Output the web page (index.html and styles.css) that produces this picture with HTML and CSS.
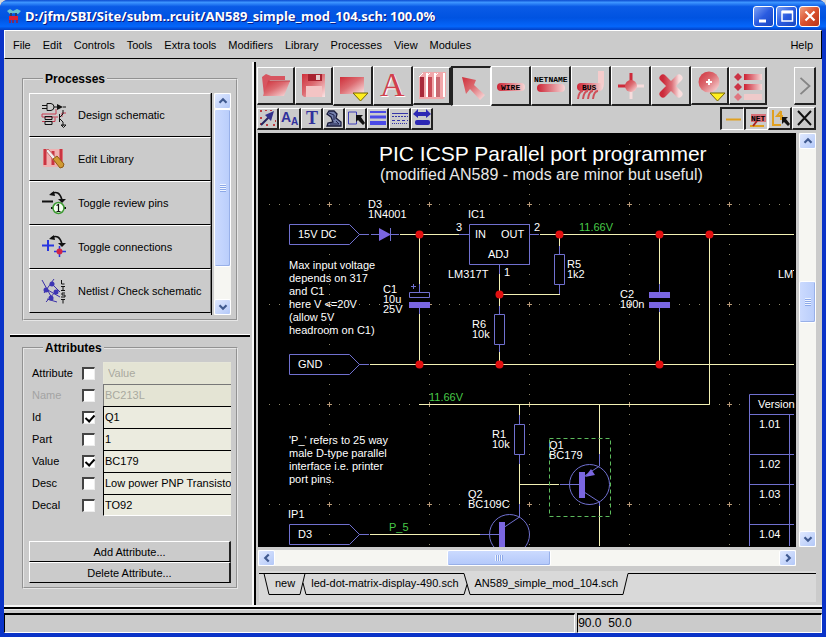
FILE: index.html
```html
<!DOCTYPE html>
<html lang="en">
<head>
<meta charset="utf-8">
<title>AN589_simple_mod_104.sch</title>
<link rel="stylesheet" href="styles.css">
</head>
<body>
<svg class="defs" aria-hidden="true">
  <defs>
    <linearGradient id="red" x1="0" y1="0" x2="1" y2="1"><stop offset="0" stop-color="#cf2f3a"/><stop offset=".45" stop-color="#dc6a70"/><stop offset="1" stop-color="#fbe6e6"/></linearGradient>
    <linearGradient id="redh" x1="0" y1="0" x2="1" y2="0"><stop offset="0" stop-color="#cc2233"/><stop offset="1" stop-color="#f6d6d6"/></linearGradient>
    <linearGradient id="cross" x1="0" y1="0" x2="1" y2="0"><stop offset="0" stop-color="#cc2a3a"/><stop offset=".55" stop-color="#dc7078"/><stop offset="1" stop-color="#f8dede"/></linearGradient>
  </defs>
</svg>
<div class="window">
  <header class="titlebar">
    <svg class="app-icon" viewBox="0 0 16 16"><path d="M1 3l3-2 3 2 4-2 4 2-3 3-4-1-4 1z" fill="#6cc3cf"/><path d="M5 5v4M10 5v4" stroke="#27406e" stroke-width="2"/><path d="M3 8h9v4H3z" fill="#dc2233"/><path d="M4 12v3M7 12v3M11 12v3" stroke="#a51c38" stroke-width="1.5"/></svg>
    <h1 class="title">D:/jfm/SBI/Site/subm..rcuit/AN589_simple_mod_104.sch: 100.0%</h1>
    <div class="win-buttons">
      <button class="win-btn" aria-label="Minimize"><svg viewBox="0 0 18 18"><path d="M4 14h7" stroke="#fff" stroke-width="3"/></svg></button>
      <button class="win-btn" aria-label="Maximize"><svg viewBox="0 0 18 18"><path d="M4 4.500h10.500v9.500H4z" fill="none" stroke="#fff" stroke-width="1.500"/><path d="M4 5h11" stroke="#fff" stroke-width="3"/></svg></button>
      <button class="win-btn close" aria-label="Close"><svg viewBox="0 0 18 18"><path d="M4.500 4.500l9 9m0-9l-9 9" stroke="#fff" stroke-width="2.200"/></svg></button>
    </div>
  </header>
  <div class="client">
    <nav class="menubar">
      <button>File</button><button>Edit</button><button>Controls</button><button>Tools</button><button>Extra tools</button><button>Modifiers</button><button>Library</button><button>Processes</button><button>View</button><button>Modules</button><button class="help">Help</button>
    </nav>
    <main class="main">
      <aside class="side">
        <section class="side-top">
          <fieldset class="group">
            <legend>Processes</legend>
            <div class="process-box">
              <div class="process-list">
                <button><svg viewBox="0 0 26 26"><g fill="none" stroke="#c83a50"><path d="M15 7v5H1v3h16M1 19.500h13v-4M25 11h-4v4"/></g><g fill="none" stroke="#111"><path d="M1 3.500h5M1 6.500h5M6 1.500h4q3 .5 3 3.500t-3 3.500H6zM13 5h3M22 5h3M4 14.500h7v3H4zM4 19.500h7v3H4zM18.500 12v8M18 16l4-4V8M18 16l4 4v4M20 23h5l-2.500 2.500z"/></g><path d="M16 2l6 3-6 3z" fill="#111"/></svg><span>Design schematic</span></button>
                <button><svg viewBox="0 0 26 26"><path d="M2 3h20v18H2z" fill="#efb1b1"/><path d="M4 3v16M12 5v14M20 3v16" stroke="#ca3441" stroke-width="3"/><path d="M7 3l9 10-2 3L5 5z" fill="#eee" stroke="#b55" stroke-width=".8"/><path d="M12 13l4-3 7 8q0 4-4 4z" fill="#d09a32" stroke="#8e5a15"/></svg><span>Edit Library</span></button>
                <button><svg viewBox="0 0 26 26"><path d="M1 11.500h11" stroke="#111" stroke-width="2"/><path d="M10 4q8-5 11 6" fill="none" stroke="#111" stroke-width="1.600"/><path d="M8 5l5-4 1 5zM17 9h8l-4 4zM10 17h2v2h-2zM23 17h2v2h-2z" fill="#111"/><circle cx="17.500" cy="18" r="5.500" fill="#f3fff0" stroke="#3b9a30" stroke-width="1.500"/><path d="M15.500 15.500l2-1v7m-2 0h4" fill="none" stroke="#111" stroke-width="1.200"/></svg><span>Toggle review pins</span></button>
                <button><svg viewBox="0 0 26 26"><path d="M1 11.500h12M7 6v11" stroke="#2735e0" stroke-width="2"/><path d="M10 4q8-5 11 6" fill="none" stroke="#111" stroke-width="1.600"/><path d="M8 5l5-4 1 5zM17 9h8l-4 4z" fill="#111"/><path d="M13 17.500h12M18.500 12v11" stroke="#2735e0" stroke-width="1.500"/><circle cx="18.500" cy="17.500" r="3" fill="#d22545"/></svg><span>Toggle connections</span></button>
                <button><svg viewBox="0 0 26 26"><path d="M1 2l11 20M13 1L3 15M5 11l14 8M17 11L5 24M10 5l9 9M6 21l10 3" stroke="#3a2fa8"/><g fill="#3d35b4"><circle cx="11" cy="6" r="2.500"/><circle cx="5" cy="12" r="2.500"/><circle cx="15" cy="14" r="2.500"/><circle cx="10" cy="20" r="2.500"/></g><path d="M20.500 2v4h3M20 8.500h4m-2 0v4m-2 0h4M24 15h-3v2h3v2h-4M20 21.500h4m-2 0v4" fill="none" stroke="#111"/></svg><span>Netlist / Check schematic</span></button>
              </div>
              <div class="scroll vertical">
                <button class="sb-btn" aria-label="Up"><svg viewBox="0 0 16 16"><path d="M4 10l4-4 4 4" fill="none" stroke="#405a90" stroke-width="2.500"/></svg></button>
                <div class="sb-track list-track"><div class="sb-thumb"></div></div>
                <button class="sb-btn" aria-label="Down"><svg viewBox="0 0 16 16"><path d="M4 6l4 4 4-4" fill="none" stroke="#405a90" stroke-width="2.500"/></svg></button>
              </div>
            </div>
          </fieldset>
        </section>
        <section class="side-bottom">
          <fieldset class="group">
            <legend>Attributes</legend>
            <div class="attrs">
              <div class="attr head"><label for="v0">Attribute</label><input type="checkbox" aria-label="Show all"><input id="v0" class="off" type="text" value="Value" disabled></div>
              <div class="attr dim"><label for="v1">Name</label><input type="checkbox" aria-label="Show name"><input id="v1" type="text" value="BC213L" disabled></div>
              <div class="attr"><label for="v2">Id</label><input type="checkbox" aria-label="Show id" checked><input id="v2" type="text" value="Q1"></div>
              <div class="attr"><label for="v3">Part</label><input type="checkbox" aria-label="Show part"><input id="v3" type="text" value="1"></div>
              <div class="attr"><label for="v4">Value</label><input type="checkbox" aria-label="Show value" checked><input id="v4" type="text" value="BC179"></div>
              <div class="attr"><label for="v5">Desc</label><input type="checkbox" aria-label="Show desc"><input id="v5" type="text" value="Low power PNP Transistor"></div>
              <div class="attr"><label for="v6">Decal</label><input type="checkbox" aria-label="Show decal"><input id="v6" type="text" value="TO92"></div>
            </div>
            <div class="attr-actions"><button>Add Attribute...</button><button>Delete Attribute...</button></div>
          </fieldset>
        </section>
      </aside>
      <section class="work">
        <div class="toolbar big">
          <button aria-label="Open"><svg viewBox="0 0 34 34"><path d="M3 8l4-3 5 2h14v4H11L5 26z" fill="#d75560"/><path d="M9 12h22l-6 15H4z" fill="url(#red)"/><path d="M9 12h22" stroke="#c24850"/></svg></button>
          <button aria-label="Save"><svg viewBox="0 0 34 34"><path d="M5 5h23v23H7l-2-2z" fill="url(#red)"/><path d="M11 5h14v7H11z" fill="#a8222f"/><path d="M19 6h4v5h-4z" fill="#e6c9c9"/><path d="M9 17h16v11H9z" fill="#f3c4c4"/></svg></button>
          <button class="wide" aria-label="Zoom window"><svg viewBox="0 0 34 34"><path d="M4 8h24v17H4z" fill="url(#red)"/><path d="M17 24h15l-7.500 8z" fill="#ffee20" stroke="#776600"/></svg></button>
          <button class="wide" aria-label="Text"><svg viewBox="0 0 34 34"><text x="5" y="28" class="big-a pale">A</text><text x="4" y="27" class="big-a">A</text></svg></button>
          <button aria-label="Library"><svg viewBox="0 0 34 34"><path d="M4 7l4-4h23v24l-3 3H4z" fill="#f1a8ab"/><path d="M7 8v20" stroke="#a8293a" stroke-width="4"/><path d="M15 8v20" stroke="#c84b57" stroke-width="4"/><path d="M23 8v20" stroke="#c96871" stroke-width="4"/><path d="M12 4v24M20 4v24M29 4v24" stroke="#fff" stroke-width="2"/><path d="M4 8l4-4m3 4l4-4m4 4l4-4" stroke="#fff"/></svg></button>
          <button class="wide pressed" aria-label="Select"><svg viewBox="0 0 34 34"><path d="M7 7l14 3-2 5 11 10-5 5-10-11-4 5z" fill="url(#red)"/></svg></button>
          <button class="wide" aria-label="Wire"><svg viewBox="0 0 34 34"><rect x="3" y="14" width="28" height="8" rx="4" fill="url(#redh)"/><text x="7" y="21" class="ic">WIRE</text></svg></button>
          <button class="wide" aria-label="Net name"><svg viewBox="0 0 34 34"><rect x="3" y="15" width="28" height="8" rx="4" fill="url(#redh)"/><text x="0" y="13" class="ic">NETNAME</text></svg></button>
          <button class="wide" aria-label="Bus"><svg viewBox="0 0 34 34"><path d="M24 2h6v13q0 6-6 6z" fill="#f5cccc"/><rect x="3" y="14" width="26" height="8" rx="4" fill="url(#redh)"/><path d="M4 30q1-8 5-8m0 8q1-8 5-8m0 8q1-8 5-8m0 8q1-8 5-8" fill="none" stroke="#cf5059" stroke-width="2"/><text x="8" y="21" class="ic">BUS</text></svg></button>
          <button class="wide" aria-label="Junction"><svg viewBox="0 0 34 34"><path d="M4 17h13V4" fill="none" stroke="#cd2a3a" stroke-width="3"/><path d="M17 30V17h13" fill="none" stroke="#f6dcdc" stroke-width="3"/><circle cx="17" cy="17" r="6" fill="url(#red)"/></svg></button>
          <button class="wide" aria-label="Delete"><svg viewBox="0 0 34 34"><path d="M9 9l16 16M25 9L9 25" stroke="url(#cross)" stroke-width="7" stroke-linecap="round"/></svg></button>
          <button aria-label="Zoom in"><svg viewBox="0 0 34 34"><circle cx="16" cy="13" r="10.500" fill="url(#red)"/><path d="M13 13h6m-3-3v6" stroke="#fff" stroke-width="2"/><path d="M17 24h15l-7.500 8z" fill="#ffee20" stroke="#776600"/></svg></button>
          <button aria-label="List"><svg viewBox="0 0 34 34"><g fill="#cb3345"><path d="M3 8l4-4 4 4-4 4zM3 18l4-4 4 4-4 4z"/><path d="M3 28l4-4 4 4-4 4z" fill="#df7680"/></g><path d="M13 5h18v6H13zM13 15h18v6H13z" fill="url(#redh)"/><path d="M13 25h18v6H13z" fill="#efcaca"/></svg></button>
          <button class="more" aria-label="More"><svg viewBox="0 0 20 34"><path d="M5 8l10 9-10 9" fill="none" stroke="#858585" stroke-width="2"/></svg></button>
        </div>
        <div class="toolbar small">
          <button aria-label="Snap"><svg viewBox="0 0 18 18"><path d="M2 1v2m5-2v1m5-1v1M1 9h2m-2 6h2m4 1h2m5 0h2m0-4h1" stroke="#bc3d42" stroke-width="2"/><path d="M2 16L12 6" stroke="#252660" stroke-width="2"/><path d="M6 6l9-4-3 10z" fill="#34328c"/></svg></button>
          <button aria-label="Font size"><svg viewBox="0 0 18 18"><text x="0" y="13" class="glyph">A</text><text x="10" y="16" class="glyph sub">A</text></svg></button>
          <button aria-label="Text style"><svg viewBox="0 0 18 18"><text x="3" y="15" class="glyph serif">T</text></svg></button>
          <button aria-label="Symbol"><svg viewBox="0 0 18 18"><path d="M4 2h5l3 3-1 4 5 4v4H2l1-3 5-1-2-5-4-3z" fill="#7480ad" stroke="#191b3c" stroke-width="1.300"/><path d="M4 4l5 2v5M5 15h9l-3-3" fill="none" stroke="#20234b"/></svg></button>
          <button aria-label="Box select"><svg viewBox="0 0 18 18"><path d="M1.500 3h8v12h-8z" fill="none" stroke="#3f3fb8"/><path d="M9 6h7l-2 2 4 6-2 2-5-5-2 2z" fill="#111"/></svg></button>
          <button aria-label="Line width"><svg viewBox="0 0 18 18"><path d="M1 3h16" stroke="#4a4ae6" stroke-width="2"/><path d="M1 8h16" stroke="#4a4ae6" stroke-width="3"/><path d="M1 14h16" stroke="#4a4ae6" stroke-width="4"/></svg></button>
          <button aria-label="Line style"><svg viewBox="0 0 18 18"><g stroke="#3535a8"><path d="M1 4.500h16"/><path d="M1 7.500h16" stroke-dasharray="2 1"/><path d="M1 11.500h16" stroke-dasharray="3 2"/><path d="M1 14.500h16" stroke-dasharray="1 1"/></g></svg></button>
          <button aria-label="Swap"><svg viewBox="0 0 18 18"><path d="M0 5l5-5v3h8V0l5 5-5 4V7H5v2z" fill="#2d28b4"/><rect x="2" y="11" width="15" height="5" rx="2" fill="#2d28b4"/></svg></button>
          <span class="spacer"></span>
          <button class="wide pressed" aria-label="Wire layer"><svg viewBox="0 0 20 18"><path d="M3 9.500h15" stroke="#e0a020" stroke-width="2"/></svg></button>
          <button class="wide pressed" aria-label="Net layer"><svg viewBox="0 0 20 18"><path d="M3 16h14" stroke="#e0a020" stroke-width="2"/><path d="M4 4h15v8H4z" fill="#d87078"/><path d="M10 11l-4 5" stroke="#a22" stroke-width="2"/><text x="4" y="11" class="ic">NET</text></svg></button>
          <button class="wide" aria-label="Measure"><svg viewBox="0 0 20 18"><path d="M3 1v15h8M11 2L7 7h6M11 2v9" fill="none" stroke="#e0a020" stroke-width="2"/><path d="M12 8h6l-2 2 4 5-2 2-4-4-2 2z" fill="#111"/></svg></button>
          <button class="wide" aria-label="Close file"><svg viewBox="0 0 20 18"><path d="M4 2l13 14M17 2L4 16" stroke="#111" stroke-width="2"/></svg></button>
        </div>
        <div class="view">
          <svg class="canvas" role="img" aria-label="Schematic">
            <g transform="translate(-258 -133)">
              <g class="dots">
                <path d="M269 204.500H794M269 304.500H794M269 404.500H794M269 504.500H794"/>
                <path d="M329.500 144V546M429.500 144V546M529.500 144V546M629.500 144V546M729.500 144V546"/>
              </g>
              <path class="plus" d="M327 204.500h5m-2.500-2.500v5M427 204.500h5m-2.500-2.500v5M527 204.500h5m-2.500-2.500v5M627 204.500h5m-2.500-2.500v5M727 204.500h5m-2.500-2.500v5M327 304.500h5m-2.500-2.500v5M427 304.500h5m-2.500-2.500v5M527 304.500h5m-2.500-2.500v5M627 304.500h5m-2.500-2.500v5M727 304.500h5m-2.500-2.500v5M327 404.500h5m-2.500-2.500v5M427 404.500h5m-2.500-2.500v5M527 404.500h5m-2.500-2.500v5M627 404.500h5m-2.500-2.500v5M727 404.500h5m-2.500-2.500v5M327 504.500h5m-2.500-2.500v5M427 504.500h5m-2.500-2.500v5M527 504.500h5m-2.500-2.500v5M627 504.500h5m-2.500-2.500v5M727 504.500h5m-2.500-2.500v5"/>
              <path class="wire" d="M400 234.500h59M540 234.500h254M419.500 234v50M419.500 314v50M370 364.500h424M499.500 274v32M499.500 352v12M499 294.500h61M559.500 234v12M659.500 234v50M659.500 312v52M709.500 234v170.500H419M519.500 404v11M519.500 464v40M519 484.500h40M599.500 404v50M599.500 505v41M370 534.500h110"/>
              <path class="part" d="M289.500 224.500h60l10 10-10 10h-60zM359 234.500h10M371 234.500h28M390.500 228v13M459 234.500h10M469.500 224.500h60v40h-60zM530 234.500h9M499.500 265v9M499.500 306v8M494.500 314.500h10v30h-10zM499.500 345v7M419.500 284v8M409.500 292.500h20v5h-20zM419.500 308v6M411 286.500h5m-2.500-2.500v5M289.500 354.500h60l10 10-10 10h-60zM359 364.500h10M559.500 246v8M554.500 254.500h10v30h-10zM559.500 285v9M659.500 284v8M659.500 308v4M519.500 415v9M514.500 424.500h10v30h-10zM519.500 455v9M560 484.500h20M599.500 454v12l-15 10M584 492l15.500 10v4M289.500 524.500h60l10 10-10 10h-60zM359 534.500h10M480 534.500h20M519.500 504v13l-15 10"/>
              <circle class="part" cx="589.500" cy="484.500" r="20"/>
              <circle class="part" cx="509.500" cy="534.500" r="20"/>
              <path class="solid" d="M379 228l12 6.500-12 6.500zM409 302h21v6h-21zM649 292h21v6h-21zM649 302h21v6h-21zM579 472h6v26h-6zM499 522h6v26h-6zM585 477l6-8 4 6z"/>
              <path class="part" d="M794 394.500h-44.500V546M749 414.500h45M749 454.500h45M749 484.500h45M749 524.500h45M789.500 414v132"/>
              <rect class="selected" x="549.500" y="438.500" width="61" height="78"/>
              <g class="node"><circle cx="419.500" cy="234.500" r="4"/><circle cx="559.500" cy="234.500" r="4"/><circle cx="659.500" cy="234.500" r="4"/><circle cx="709.500" cy="234.500" r="4"/><circle cx="499.500" cy="294.500" r="4"/><circle cx="419.500" cy="364.500" r="4"/><circle cx="499.500" cy="364.500" r="4"/><circle cx="659.500" cy="364.500" r="4"/></g>
              <text class="h1" x="379" y="161">PIC ICSP Parallel port programmer</text>
              <text class="h2" x="380" y="180">(modified AN589 - mods are minor but useful)</text>
              <text x="368" y="208">D3</text><text x="368" y="218">1N4001</text><text x="298" y="238">15V DC</text><text x="298" y="368">GND</text><text x="298" y="538">D3</text><text x="288" y="518">IP1</text>
              <text x="468" y="218">IC1</text><text x="456" y="231">3</text><text x="534" y="231">2</text><text x="475" y="238">IN</text><text x="501" y="238">OUT</text><text x="488" y="258">ADJ</text><text x="504" y="276">1</text><text x="448" y="278">LM317T</text>
              <text x="383" y="293">C1</text><text x="383" y="303">10u</text><text x="383" y="313">25V</text>
              <text x="472" y="328">R6</text><text x="472" y="338">10k</text><text x="567" y="268">R5</text><text x="567" y="278">1k2</text><text x="620" y="298">C2</text><text x="620" y="308">100n</text>
              <text x="492" y="438">R1</text><text x="492" y="448">10k</text><text x="549" y="449">Q1</text><text x="549" y="459">BC179</text><text x="468" y="498">Q2</text><text x="468" y="508">BC109C</text>
              <text x="778" y="278">LM</text><path d="M793 270.500h1" stroke="#fff"/>
              <g class="net"><text x="579" y="231">11.66V</text><text x="429" y="401">11.66V</text><text x="389" y="531">P_5</text></g>
              <g class="note"><text x="289" y="269">Max input voltage</text><text x="289" y="282">depends on 317</text><text x="289" y="295">and C1</text><text x="289" y="308">here V &lt;=20V</text><text x="289" y="321">(allow 5V</text><text x="289" y="334">headroom on C1)</text>
              <text x="289" y="444">'P_' refers to 25 way</text><text x="289" y="457">male D-type parallel</text><text x="289" y="470">interface i.e. printer</text><text x="289" y="483">port pins.</text>
              <text x="758" y="408">Version</text><text x="759" y="428">1.01</text><text x="759" y="468">1.02</text><text x="759" y="498">1.03</text><text x="759" y="538">1.04</text></g>
            </g>
          </svg>
          <div class="scroll vertical">
            <button class="sb-btn" aria-label="Up"><svg viewBox="0 0 16 16"><path d="M4 10l4-4 4 4" fill="none" stroke="#405a90" stroke-width="2.500"/></svg></button>
            <div class="sb-track canvas-track"><div class="sb-thumb"></div></div>
            <button class="sb-btn" aria-label="Down"><svg viewBox="0 0 16 16"><path d="M4 6l4 4 4-4" fill="none" stroke="#405a90" stroke-width="2.500"/></svg></button>
          </div>
          <div class="scroll horizontal">
            <button class="sb-btn" aria-label="Left"><svg viewBox="0 0 16 16"><path d="M10 4L6 8l4 4" fill="none" stroke="#405a90" stroke-width="2.500"/></svg></button>
            <div class="sb-track"><div class="sb-thumb"></div></div>
            <button class="sb-btn" aria-label="Right"><svg viewBox="0 0 16 16"><path d="M6 4l4 4-4 4" fill="none" stroke="#405a90" stroke-width="2.500"/></svg></button>
          </div>
        </div>
        <div class="tabs">
          <svg class="tab-start" viewBox="0 0 12 22"><path d="M0 .5h5l5 21h2M5 .5h7" fill="none" stroke="#000"/></svg>
          <button>new</button>
          <svg class="tab-join" viewBox="0 0 8 22"><path d="M0 .500h8M0 21.500h1L6 .500M4 10l3 11.500h1" fill="none" stroke="#000"/></svg>
          <button>led-dot-matrix-display-490.sch</button>
          <svg class="tab-join" viewBox="0 0 8 22"><path d="M0 .500h1l6 21h1M0 21.500h1l3-10" fill="none" stroke="#000"/></svg>
          <button class="current">AN589_simple_mod_104.sch</button>
          <svg class="tab-join" viewBox="0 0 8 22"><path d="M0 21.500h1L6 .500h2" fill="none" stroke="#000"/></svg>
          <span class="tab-line"></span>
        </div>
      </section>
    </main>
    <footer class="status"><div class="message"></div><output class="coords">90.0&nbsp; 50.0</output></footer>
  </div>
</div>
</body>
</html>
```
FILE: styles.css
```css
* { box-sizing: border-box; }
body { margin: 0; background: #d8d8d8; font: 11px/14px "Liberation Sans", sans-serif; color: #000; }
button, input { font: inherit; color: inherit; margin: 0; }
button { padding: 0; border: 0; background: none; }
svg { display: block; flex: none; }
.defs { position: absolute; width: 0; height: 0; }

.window { min-height: 100vh; display: flex; flex-direction: column; padding: 0 4px 4px; background: #0a33c8; border-radius: 8px 8px 0 0; }
.titlebar { height: 30px; margin: 0 -4px; padding: 2px 6px 0 6px; display: flex; align-items: center; gap: 3px; border-radius: 8px 8px 0 0; background: linear-gradient(#0b4bd0, #3d95ff 8%, #0a5be6 22%, #0053e1 60%, #0466fb 88%, #0340c4); }
.app-icon { width: 16px; height: 16px; }
.title { flex: 1; margin: 0; color: #fff; font: 700 13px/18px "Noto Sans", sans-serif; text-shadow: 1px 1px #0a1883; white-space: nowrap; }
.win-buttons { display: flex; gap: 2px; }
.win-btn { display: flex; align-items: center; justify-content: center; width: 21px; height: 21px; border: 1px solid #fff; border-radius: 3px; background: linear-gradient(135deg, #7ea2f4, #2a5be0 50%, #1746c0); }
.win-btn svg { width: 18px; height: 18px; }
.win-btn.close { background: linear-gradient(135deg, #f0a080, #d9502d 50%, #b9351a); }

.client { flex: 1; display: flex; flex-direction: column; background: #cbcbcb; }
.menubar { height: 29px; display: flex; align-items: center; gap: 12px; padding: 0 8px; border: 1px solid #fff; border-right-color: #000; border-bottom-color: #000; }
.menubar .help { margin-left: auto; }

.main { flex: 1; display: flex; min-height: 0; padding-top: 3px; }
.side { width: 252px; flex: none; display: flex; flex-direction: column; border-right: 2px solid #000; box-shadow: inset -2px 0 #f8f8f8; }
.side-top { margin: 0 4px 0 6px; padding: 10px 12px 14px; border-bottom: 2px solid #000; box-shadow: inset 0 -1px #fff; }
.side-bottom { padding: 4px 16px 14px 18px; flex: 1; }
.group { margin: 0; padding: 7px 5px 4px; border: 2px groove #e6e6e6; min-width: 0; }
.group legend { margin-left: 14px; padding: 0 2px; font: 700 12px/14px "Liberation Sans", sans-serif; }
.process-box { display: flex; }
.process-list { flex: 1; border-right: 1px solid #000; }
.process-list button { display: flex; align-items: center; gap: 11px; width: 100%; height: 44px; padding: 0 0 0 11px; border: 1px solid #fff; border-right-color: #777; border-bottom-color: #000; text-align: left; white-space: nowrap; }
.process-list svg { width: 26px; height: 26px; }

.scroll { display: flex; background: #f6f6f2; }
.vertical { flex-direction: column; width: 17px; }
.horizontal { height: 16px; }
.process-box .scroll { margin: 0 0 0 2px; height: 222px; }
.sb-btn { display: flex; align-items: center; justify-content: center; flex: none; width: 17px; height: 16px; border: 1px solid #fff; border-radius: 2px; background: linear-gradient(135deg, #e0e9ff, #b3c8f8); }
.sb-btn svg { width: 14px; height: 14px; }
.sb-track { flex: 1; display: flex; min-width: 0; min-height: 0; }
.vertical .sb-track { flex-direction: column; }
.sb-thumb { border: 1px solid #fff; border-radius: 2px; box-shadow: inset -1px -1px #98b0e8; }
.vertical .sb-thumb { background: repeating-linear-gradient(#eef4ff 0 1px, #8ca8e8 1px 2px) center / 6px 8px no-repeat, linear-gradient(90deg, #cbdafe, #b9cdfb); }
.horizontal .sb-thumb { background: repeating-linear-gradient(90deg, #eef4ff 0 1px, #8ca8e8 1px 2px) center / 8px 6px no-repeat, linear-gradient(#cbdafe, #b3c8fa); }
.list-track .sb-thumb { height: 83%; }

.attr { display: grid; grid-template-columns: 50px 13px 1fr; align-items: center; height: 22px; padding-left: 3px; }
.attr input[type="checkbox"] { appearance: none; width: 13px; height: 13px; background: #fff; border: 2px solid #444; border-right: 1px solid #eee; border-bottom: 1px solid #eee; }
.attr input[type="checkbox"]:checked::before { content: ""; display: block; width: 4px; height: 7px; margin: 0 0 0 3px; border: solid #000; border-width: 0 2px 2px 0; transform: rotate(42deg); }
.attr input[type="text"] { min-width: 0; width: auto; height: 22px; margin-left: 8px; padding: 0 0 1px 1px; border: 0; border-top: 1px solid #000; border-left: 1px solid #000; border-radius: 0; background: #ebebdf; }
.attr:last-child input[type="text"] { border-bottom: 1px solid #fff; }
.attr input:disabled { color: #a9a99f; background: #e4e4d4; border-top-color: #777; border-left-color: #777; }
.attr input[type="text"].off { border-color: #e6e6d8; padding-left: 4px; }
.attr.dim label { color: #a3a3a3; }
.attr-actions { margin-top: 25px; }
.attr-actions button { display: block; width: 100%; height: 21px; border: 1px solid #fff; border-right: 2px solid #222; border-bottom: 1px solid #000; }

.work { flex: 1; min-width: 0; display: flex; flex-direction: column; padding: 4px 6px 5px 1px; }
.toolbar { display: flex; align-items: center; }
.toolbar button { display: flex; align-items: center; justify-content: center; flex: none; border: 1px solid #fff; border-right: 2px solid #222; border-bottom: 2px solid #222; }
.toolbar button.pressed { border: 1px solid #fff; border-top: 2px solid #222; border-left: 2px solid #222; }
.big { height: 40px; }
.big button { width: 38px; height: 38px; }
.big .wide { width: 40px; height: 40px; }
.big svg { width: 34px; height: 34px; }
.big .more { width: 22px; margin-left: auto; }
.big .more svg { width: 18px; }
.small { height: 25px; }
.small button { width: 22px; height: 22px; }
.small svg { width: 18px; height: 18px; }
.small .wide { width: 24px; height: 23px; }
.small .wide svg { width: 20px; }
.small .spacer { flex: 1; }
.ic { font: 700 8px "Liberation Mono", monospace; fill: #000; }
.big-a { font: 34px/34px "Liberation Serif", serif; fill: #d2404c; }
.big-a.pale { fill: #fff; }
.glyph { font: 700 14px "Liberation Sans", sans-serif; fill: #30309c; }
.glyph.sub { font-size: 10px; }
.glyph.serif { font: 700 18px "Liberation Serif", serif; }

.view { flex: 1; min-height: 0; display: grid; grid-template: 1fr 16px / 1fr 17px; gap: 3px; padding: 2px 0 5px 1px; }
.canvas { width: 100%; height: 100%; background: #000; overflow: hidden; }
.canvas text { fill: #fff; font-size: 11px; }
.canvas .h1 { font-size: 21px; }
.canvas .h2 { font-size: 16px; fill: #e8e8e8; }
.canvas .net text { fill: #48c848; }
.dots { stroke: #8b8668; stroke-dasharray: 1 9; }
.plus { stroke: #b89a78; }
.wire { stroke: #f3f1b4; fill: none; }
.part { stroke: #7070d0; fill: none; }
.solid { fill: #7a66e0; }
.node { fill: #e01010; }
.selected { fill: none; stroke: #5cba5c; stroke-dasharray: 4 3; }
.canvas-track { padding: 132px 0 0; }
.canvas-track .sb-thumb { height: 42px; }
.horizontal .sb-track { padding-left: 32%; }
.horizontal .sb-thumb { width: 104px; }

.tabs { display: flex; height: 31px; align-items: flex-start; padding-top: 2px; margin-left: 2px; background: #d9d9d9; }
.tabs svg { height: 22px; }
.tab-start { width: 12px; }
.tab-join { width: 8px; }
.tabs button { height: 22px; padding: 0 4px 3px; border-bottom: 1px solid #000; border-top: 1px solid #000; white-space: nowrap; }
.tabs .current { border-top-color: transparent; }
.tab-line { flex: 1; border-top: 1px solid #000; }

.status { display: grid; grid-template-columns: 7fr 3fr; gap: 2px; height: 26px; padding-top: 4px; border-top: 2px solid #000; box-shadow: 0 -2px #f4f4f4, inset 0 1px #e8e8e8; }
.message, .coords { border: 1px solid #000; border-right-color: #fff; border-bottom-color: #fff; border-top: 2px solid #000; }
.coords { padding: 1px 0; font-size: 12px; line-height: 15px; }
```
